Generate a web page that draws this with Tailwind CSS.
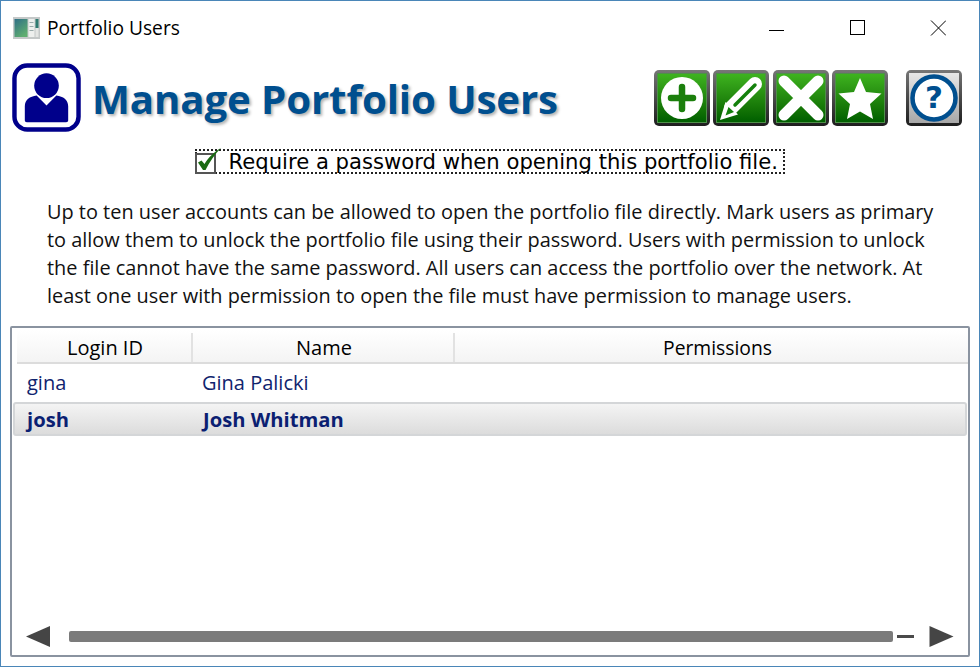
<!DOCTYPE html>
<html lang="en">
<head>
<meta charset="utf-8">
<title>Portfolio Users</title>
<script src="https://cdn.jsdelivr.net/npm/@tailwindcss/browser@4"></script>
</head>
<body class="bg-white">
<div class="w-[980px] h-[667px] border border-[#4a86b8] bg-white flex flex-col font-['Open_Sans','Noto_Sans',sans-serif] text-black overflow-hidden">

  <!-- title bar -->
  <div class="h-[40px] flex items-center pl-[12px] shrink-0 mt-[7px]">
    <svg width="27" height="22" viewBox="0 0 27 22" class="shrink-0">
      <defs><linearGradient id="ic" x1="0" y1="0" x2="0.6" y2="1"><stop offset="0" stop-color="#2f6f86"/><stop offset="1" stop-color="#5fae70"/></linearGradient></defs>
      <rect width="27" height="22" fill="#c4c8c8"/>
      <rect x="1.5" y="2" width="13" height="18" fill="url(#ic)"/>
      <rect x="15.5" y="2" width="6" height="18" fill="#eef0ee"/>
      <rect x="16.5" y="5" width="4" height="1" fill="#9aa"/>
      <rect x="16.5" y="9" width="4" height="1" fill="#9aa"/>
      <rect x="16.5" y="13" width="4" height="1" fill="#9aa"/>
      <rect x="22.5" y="2" width="3" height="9" fill="#2f7a70"/>
      <rect x="22.5" y="11" width="3" height="9" fill="#e4e6e4"/>
    </svg>
    <span class="ml-[7px] text-[19.2px] leading-none">Portfolio Users</span>
    <div class="ml-auto flex items-center shrink-0">
      <svg width="16" height="16" viewBox="0 0 16 16" class="mr-[65px]"><path d="M1 10.5H16" stroke="#000" stroke-width="1"/></svg>
      <svg width="16" height="16" viewBox="0 0 16 16" class="mr-[65px]"><rect x="1.5" y="0.5" width="14" height="14" fill="none" stroke="#000"/></svg>
      <svg width="16" height="16" viewBox="0 0 16 16" class="mr-[33px]"><path d="M1 0.5L16 15.5M16 0.5L1 15.5" stroke="#000" stroke-width="1"/></svg>
    </div>
  </div>

  <!-- header -->
  <div class="h-[72px] flex items-center pl-[11px] shrink-0 mt-[15px]">
    <svg width="69" height="69" viewBox="0 0 70 70" class="shrink-0 -mt-[3px]">
      <rect x="2.5" y="2.5" width="65" height="65" rx="13" fill="#fff" stroke="#00008b" stroke-width="4.5"/>
      <circle cx="35" cy="23" r="12.5" fill="#00008b"/>
      <path d="M13 58V44C13 37 18 34 25 33L35 43L45 33C52 34 57 37 57 44V58C57 59.500 56 60 55 60H15C14 60 13 59.500 13 58Z" fill="#00008b"/>
    </svg>
    <h1 class="ml-[11px] text-[40.2px] leading-none font-bold text-[#004f8f] tracking-[-0.1px] [text-shadow:2px_2px_3px_rgba(0,0,0,0.3)] whitespace-nowrap">Manage Portfolio Users</h1>
    <div class="ml-auto flex items-center mr-[17px] -mt-[3px]">
      <button class="w-[56px] h-[56px] rounded-[5px] p-[3px] bg-gradient-to-b from-[#777] to-[#1e1e1e] mr-[3px]">
        <span class="block w-full h-full border border-[#4f8f4a] bg-gradient-to-b from-[#3eb31f] to-[#005f00]">
          <svg viewBox="0 0 48 48" class="w-full h-full"><circle cx="24" cy="24" r="21" fill="#fff"/><path d="M24 13V35M13 24H35" stroke="#1b7f0c" stroke-width="6.500" stroke-linecap="round"/></svg>
        </span>
      </button>
      <button class="w-[56px] h-[56px] rounded-[5px] p-[3px] bg-gradient-to-b from-[#777] to-[#1e1e1e] mr-[4px]">
        <span class="block w-full h-full border border-[#4f8f4a] bg-gradient-to-b from-[#3eb31f] to-[#005f00]">
          <svg viewBox="0 0 48 48" class="w-full h-full"><path d="M14 34L38 10" stroke="#fff" stroke-width="14" stroke-linecap="round"/><path d="M3 46L8.500 28L21 40.500Z" fill="#fff"/><path d="M18 31L38 11" stroke="#14800c" stroke-width="3.500" stroke-linecap="round"/><path d="M8.500 41.500L11.500 33L17 38Z" fill="#14800c"/></svg>
        </span>
      </button>
      <button class="w-[56px] h-[56px] rounded-[5px] p-[3px] bg-gradient-to-b from-[#777] to-[#1e1e1e] mr-[3px]">
        <span class="block w-full h-full border border-[#4f8f4a] bg-gradient-to-b from-[#3eb31f] to-[#005f00]">
          <svg viewBox="0 0 48 48" class="w-full h-full"><path d="M7 7L41 41M41 7L7 41" stroke="#fff" stroke-width="11" stroke-linecap="round"/></svg>
        </span>
      </button>
      <button class="w-[56px] h-[56px] rounded-[5px] p-[3px] bg-gradient-to-b from-[#777] to-[#1e1e1e] mr-[18px]">
        <span class="block w-full h-full border border-[#4f8f4a] bg-gradient-to-b from-[#3eb31f] to-[#005f00]">
          <svg viewBox="0 0 48 48" class="w-full h-full"><path d="M24 4L30 18L45.500 19.500L34 30L37 45L24 37.500L11 45L14 30L2.500 19.500L18 18Z" fill="#fff"/></svg>
        </span>
      </button>
      <button class="w-[56px] h-[56px] rounded-[5px] p-[3px] bg-gradient-to-b from-[#777] to-[#1e1e1e]">
        <span class="relative block w-full h-full bg-gradient-to-b from-[#e6e6e6] to-[#a8a8a8]">
          <svg viewBox="0 0 50 50" class="w-full h-full"><circle cx="25" cy="25" r="21.500" fill="#fff" stroke="#004f8f" stroke-width="4.500"/></svg>
          <span class="absolute inset-0 flex items-center justify-center text-[31px] leading-none font-bold text-[#004f8f] font-['DejaVu_Sans',sans-serif]">?</span>
        </span>
      </button>
    </div>
  </div>

  <!-- password checkbox -->
  <div class="flex justify-center shrink-0 mt-[14px]">
    <label class="flex items-center h-[25px] w-[590px] ml-[-1px] border-2 border-dotted border-[#222]">
      <svg width="26" height="27" viewBox="0 0 26 27" class="shrink-0 -ml-[2px] -mt-[3px]">
        <rect x="1" y="7" width="19" height="19" fill="#fff" stroke="#555" stroke-width="2"/>
        <path d="M3 15.500L6.500 13.500L9.500 17C13 11 19 5 26 1C20 7 14.500 15 10.500 23H8Z" fill="#1a6a12"/>
      </svg>
      <span class="ml-[8px] mt-[1px] text-[21.150px] leading-none font-['DejaVu_Sans',sans-serif] whitespace-nowrap">Require a password when opening this portfolio file.</span>
    </label>
  </div>

  <!-- description -->
  <div class="pl-[46px] pr-[20px] mt-[24px] text-[19.920px] leading-[28px] text-[#111] shrink-0">
    <div class="whitespace-nowrap">Up to ten user accounts can be allowed to open the portfolio file directly. Mark users as primary</div>
    <div class="whitespace-nowrap">to allow them to unlock the portfolio file using their password. Users with permission to unlock</div>
    <div class="whitespace-nowrap">the file cannot have the same password. All users can access the portfolio over the network. At</div>
    <div class="whitespace-nowrap">least one user with permission to open the file must have permission to manage users.</div>
  </div>

  <!-- users table -->
  <div class="ml-[9px] mr-[9px] mt-[16px] mb-[9px] flex-1 min-h-0 rounded-[2px] border-2 border-[#8a93a0] flex flex-col pt-[2px] bg-white">
    <div class="flex h-[34px] ml-[5px] pt-[3px] border-b-2 border-[#dcdcdc] bg-gradient-to-b from-white to-[#f4f4f4] text-[20px] shrink-0">
      <div class="w-[176px] border-r-2 border-[#e2e2e2] flex items-center justify-center pl-[2px]">Login ID</div>
      <div class="w-[262px] border-r-2 border-[#e2e2e2] flex items-center justify-center pl-[2px]">Name</div>
      <div class="flex-1 flex items-center justify-center pl-[12px] pt-[1px] text-[19.300px]">Permissions</div>
    </div>
    <div class="flex h-[38px] items-center text-[20px] text-[#10246e] shrink-0">
      <div class="w-[190px] pl-[15px]">gina</div>
      <div>Gina Palicki</div>
    </div>
    <div class="flex h-[34px] items-center text-[20.200px] font-bold text-[#0b1f72] ml-[1px] mr-[1px] rounded-[3px] border-2 border-[#d4d6d8] bg-gradient-to-b from-[#f4f4f4] to-[#dcdcdc] shrink-0">
      <div class="w-[188px] pl-[12px]">josh</div>
      <div>Josh Whitman</div>
    </div>
    <div class="mt-auto flex items-center h-[21px] mb-[8px] pl-[14px] pr-[14px] shrink-0">
      <svg width="25" height="21" viewBox="0 0 25 21" class="shrink-0"><path d="M0 10.500L24 0V21Z" fill="#454545"/></svg>
      <div class="ml-[18px] flex-1 h-[11px] rounded-[2px] bg-[#7b7b7b]"></div>
      <div class="ml-[4px] w-[17px] h-[2.500px] bg-[#4a4a4a]"></div>
      <svg width="25" height="21" viewBox="0 0 25 21" class="shrink-0 ml-[15px]"><path d="M24.500 10.500L0.500 0V21Z" fill="#454545"/></svg>
    </div>
  </div>
</div>
</body>
</html>
